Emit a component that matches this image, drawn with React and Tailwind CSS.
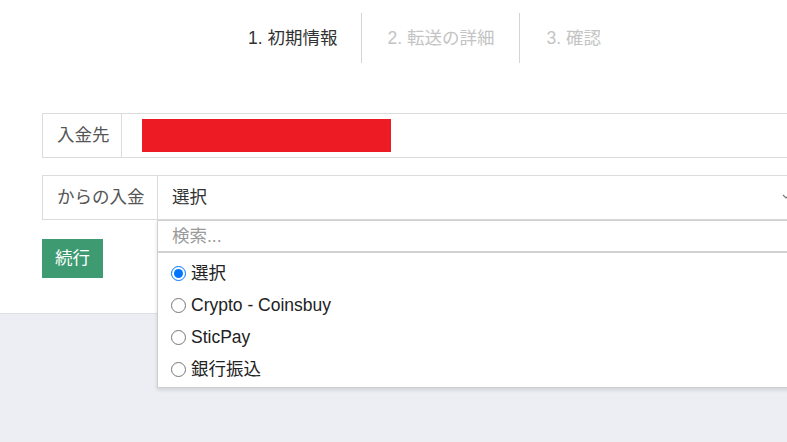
import React from "react";

const font = "font-['Liberation_Sans','Noto_Sans_CJK_JP',sans-serif]";

function Radio({ checked }) {
  return (
    <span
      className={
        "w-[15px] h-[15px] rounded-full border flex items-center justify-center shrink-0 " +
        (checked ? "border-[#0075ff]" : "border-[#767676]")
      }
    >
      {checked && <span className="w-[9px] h-[9px] rounded-full bg-[#0075ff]" />}
    </span>
  );
}

export default function App() {
  const options = ["選択", "Crypto - Coinsbuy", "SticPay", "銀行振込"];
  return (
    <div className={"w-[787px] h-[442px] bg-[#eceef4] overflow-hidden relative " + font}>
      <div className="bg-white h-[314px] border-b border-[#dcdfe6]">
        <div className="flex pl-[223px] pt-[13px]">
          <div className="h-[50px] pl-[25px] pr-[24px] flex items-center text-[17.5px] text-[#333]">1. 初期情報</div>
          <div className="h-[50px] pl-[25px] pr-[25px] flex items-center text-[17.5px] text-[#c4c4c4] border-l border-[#d4d4d4]">2. 転送の詳細</div>
          <div className="h-[50px] pl-[26px] pr-[24px] flex items-center text-[17.5px] text-[#c4c4c4] border-l border-[#d4d4d4]">3. 確認</div>
        </div>

        <div className="ml-[42px] mt-[50px] w-[900px]">
          <div className="flex h-[45px] border border-[#dcdcdc]">
            <div className="w-[79px] border-r border-[#dcdcdc] flex items-center pl-[14px] text-[17.5px] text-[#555]">入金先</div>
            <div className="flex-1 flex items-center pl-[20px]">
              <div className="w-[249px] h-[33px] bg-[#ed1c24]" />
            </div>
          </div>

          <div className="relative mt-[17px]">
            <div className="flex h-[45px] border border-[#dcdcdc]">
              <div className="w-[115px] border-r border-[#dcdcdc] flex items-center pl-[14px] text-[17.5px] text-[#555]">からの入金</div>
              <div className="flex-1 flex items-center pl-[14px] text-[17.5px] text-[#333]">選択</div>
            </div>

            <button className="mt-[19px] w-[61px] h-[39px] bg-[#3e9a71] text-white text-[17.5px] flex items-center justify-center">続行</button>

            <div className="absolute left-[115px] top-[45px] w-[800px] h-[168px] bg-white border border-[#cfcfcf] shadow-[0_2px_4px_rgba(0,0,0,0.12)] flex flex-col">
              <div className="h-[32px] border-b-2 border-[#d2d2d2] flex items-center pl-[14px] text-[17.5px] text-[#9a9a9a]">検索...</div>
              <div className="pt-[4px] flex flex-col">
                {options.map((o, i) => (
                  <div key={o} className="h-[32px] flex items-center pl-[13px] gap-[5px] text-[17.5px] text-[#222]">
                    <Radio checked={i === 0} />
                    <span>{o}</span>
                  </div>
                ))}
              </div>
            </div>
          </div>
        </div>
      </div>
      <svg className="absolute left-[782px] top-[193px]" width="8" height="8" viewBox="0 0 8 8">
        <path d="M1 2 L4 5 L7 2" stroke="#777" strokeWidth="1.2" fill="none" />
      </svg>
    </div>
  );
}
